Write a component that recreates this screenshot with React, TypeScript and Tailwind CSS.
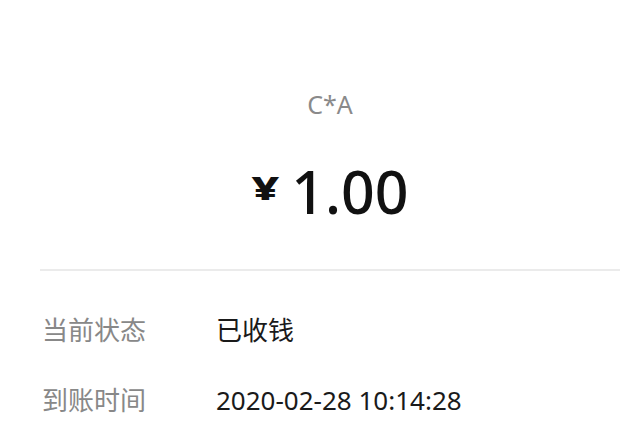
export default function App() {
  const rows = [
    { label: "当前状态", value: "已收钱" },
    { label: "到账时间", value: "2020-02-28 10:14:28" },
  ];

  return (
    <div
      className="h-[440px] w-[640px] overflow-hidden bg-white pl-[40px] pr-[20px]"
      style={{ fontFamily: '"Noto Sans", "Noto Sans CJK SC", sans-serif' }}
    >
      <div className="pt-[86px] text-center text-[25px] leading-[36px] text-[#8a8a8a]">
        C*A
      </div>

      <div className="mt-[40px] flex items-start justify-center text-[#111]">
        <span className="mr-[12px] mt-[9px] origin-top scale-y-[0.68] text-[48px] font-extrabold leading-none">
          ¥
        </span>
        <span className="text-[59px] font-medium leading-none">1.00</span>
      </div>

      <div className="mt-[48px] h-[2px] bg-[#ebebeb]" />

      <div className="pt-[24px]">
        {rows.map((r) => (
          <div key={r.label} className="flex h-[70px] items-center">
            <div className="w-[176px] pl-[2px] text-[26px] text-[#888]">{r.label}</div>
            <div className="text-[26px] text-[#1a1a1a]">{r.value}</div>
          </div>
        ))}
      </div>
    </div>
  );
}
